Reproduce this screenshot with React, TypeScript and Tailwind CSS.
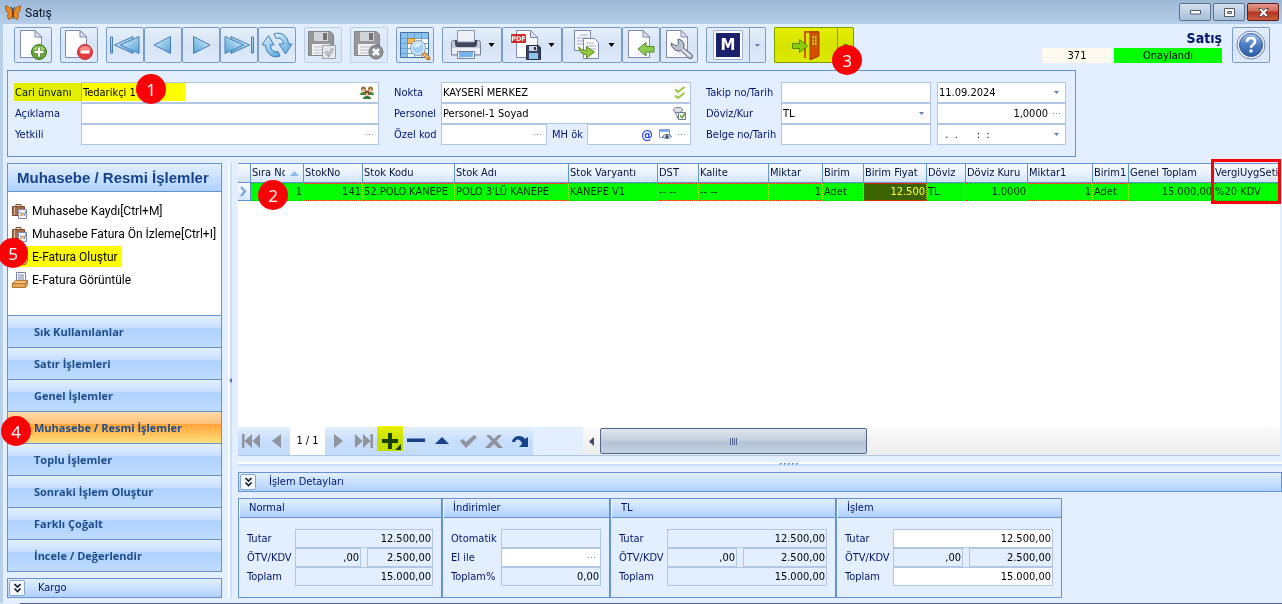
import React, { useId } from "react";
import type { ReactNode } from "react";

const FORM_FONT = "font-['DejaVu_Sans_Condensed','DejaVu_Sans',sans-serif] text-[11px] leading-[14px]";

/* ---------- small glyphs ---------- */

function Caret({ className = "" }: { className?: string }) {
  return (
    <svg width="7" height="4" viewBox="0 0 7 4" className={className} aria-hidden="true">
      <path d="M0.5 0h6L3.5 4z" fill="currentColor" />
    </svg>
  );
}

function Dots() {
  return (
    <svg width="8" height="2" viewBox="0 0 8 2" className="text-[#6f93c4]" aria-hidden="true">
      <path d="M0 0h1v1H0zM3 0h1v1H3zM6 0h1v1H6z" fill="currentColor" />
    </svg>
  );
}

function DoubleChevron() {
  return (
    <svg width="9" height="10" viewBox="0 0 9 10" aria-hidden="true">
      <path d="M1.5 1l3 3 3-3M1.5 5.500l3 3 3-3" fill="none" stroke="#101828" strokeWidth="1.6" />
    </svg>
  );
}

/* ---------- toolbar drawings ---------- */

function Page({ x = 4 }: { x?: number }) {
  return (
    <g transform={`translate(${x} 0)`}>
      <path d="M0.500 1.500H15L21.500 8V28.500H0.500z" fill="#fdfdff" stroke="#8186ad" />
      <path d="M15 1.500V8h6.500z" fill="#e4e6f4" stroke="#8186ad" />
      <path d="M3 26C12 26 17 20 19 11v15z" fill="#e6eaf6" />
    </g>
  );
}

function Drawing({ children }: { children: ReactNode }) {
  return (
    <svg width="32" height="32" viewBox="0 0 32 32" aria-hidden="true">
      {children}
    </svg>
  );
}

function NewIcon() {
  return (
    <Drawing>
      <Page x={3} />
      <circle cx="22" cy="23" r="7.500" fill="#69a838" stroke="#3f7422" />
      <path d="M16 21a6.500 6.500 0 0 1 12 0q-6 3-12 0z" fill="#a6d47a" />
      <path d="M20.500 18h3v3.500H27v3h-3.500V28h-3v-3.500H17v-3h3.500z" fill="#fff" stroke="#4a7d2a" strokeWidth="0.700" />
    </Drawing>
  );
}

function DeleteIcon() {
  return (
    <Drawing>
      <Page x={2} />
      <circle cx="22" cy="23" r="7.500" fill="#e23c3c" stroke="#c93232" />
      <path d="M16 21a6.500 6.500 0 0 1 12 0q-6 2-12 0z" fill="#f58c8c" />
      <path d="M17.500 21.500h9v3h-9z" fill="#fff" />
    </Drawing>
  );
}

function BlueGradient({ id }: { id: string }) {
  return (
    <defs>
      <linearGradient id={id} x1="0" y1="0" x2="1" y2="1">
        <stop offset="0" stopColor="#e4f5fd" />
        <stop offset="1" stopColor="#4fa0d8" />
      </linearGradient>
    </defs>
  );
}

function ArrowIcon({ kind }: { kind: "first" | "prev" | "next" | "last" }) {
  const id = useId();
  const double = kind === "first" || kind === "last";
  const flip = kind === "next" || kind === "last";
  return (
    <Drawing>
      <BlueGradient id={id} />
      <g transform={flip ? "translate(32 0) scale(-1 1)" : undefined} fill={`url(#${id})`} stroke="#4a7fb5">
        {double ? (
          <>
            <path d="M1.500 8h2v16h-2z" />
            <path d="M24 7.500v17L5.500 16z" />
            <path d="M30 7.500v17L11.500 16z" />
          </>
        ) : (
          <path d="M23.500 7.500v17L7 16z" />
        )}
      </g>
    </Drawing>
  );
}

function RefreshIcon() {
  const id = useId();
  return (
    <Drawing>
      <BlueGradient id={id} />
      <g fill={`url(#${id})`} stroke="#3f7fb8" strokeLinejoin="round">
        <path d="M13 5C20 2 27 7 27.500 15H31l-6.500 10L18 15h4.500C22 11 19 8 15 9.500z" />
        <path d="M19 27C12 30 5 25 4.500 16H1L7.500 6.500 13 16H9.500C10 21 13 24 17 22.500z" />
      </g>
    </Drawing>
  );
}

function Floppy({ dark = "#828282" }: { dark?: string }) {
  return (
    <g>
      <path d="M1.500 2.500h22l3 3v21h-25z" fill={dark} stroke="#6e6e6e" />
      <path d="M7 3h14v9H7z" fill="#cfcfcf" />
      <path d="M16 4h4v7h-4z" fill="#555" />
      <path d="M5 15h18v11H5z" fill="#f2f2f2" />
      <path d="M7 18h14M7 21h14M7 24h14" stroke="#b5b5b5" />
    </g>
  );
}

function SaveCheckIcon() {
  return (
    <Drawing>
      <Floppy />
      <path d="M15.500 16.500h13v13h-13z" fill="#e5e5e5" stroke="#8d8d8d" />
      <path d="M18.500 22.500l3 3.500 4.500-6.500" fill="none" stroke="#777" strokeWidth="2.600" />
      <path d="M18.500 22.500l3 3.500 4.500-6.500" fill="none" stroke="#fff" strokeWidth="1" />
    </Drawing>
  );
}

function SaveCancelIcon() {
  return (
    <Drawing>
      <Floppy />
      <circle cx="23" cy="23" r="7" fill="#777" stroke="#5d5d5d" />
      <path d="M20 20l6 6M26 20l-6 6" stroke="#fff" strokeWidth="2.800" />
    </Drawing>
  );
}

function GridSearchIcon() {
  return (
    <Drawing>
      <path d="M1.500 3.500h28v25h-28z" fill="#fff" stroke="#3f70a8" />
      <path d="M2 4h27v5H2zM2 9h6v19H2z" fill="#8cc3ee" />
      <path d="M2 9.500h27M2 14.500h27M2 19.500h27M2 24.500h27M8.500 4v24M15.500 4v24M22.500 4v24" stroke="#6ba1d3" />
      <path d="M8.500 9.500h7v5h-7z" fill="#f7bd58" stroke="#c27f1f" />
      <path d="M24 24l5.500 5.500" stroke="#c87f2c" strokeWidth="4" strokeLinecap="round" />
      <path d="M24.500 24.500l4.500 4.500" stroke="#f5c98b" strokeWidth="1.500" />
      <circle cx="19" cy="19" r="6.500" fill="#9fd0f6" stroke="#e3ebf5" strokeWidth="2" />
      <circle cx="19" cy="19" r="7.500" fill="none" stroke="#5b7fae" strokeWidth="0.800" />
      <path d="M15 18a4.500 4.500 0 0 1 7-3q-2 4-7 3z" fill="#e6f5ff" />
    </Drawing>
  );
}

function PrinterIcon() {
  return (
    <Drawing>
      <path d="M1.500 13.500q0-2 2-2h25q2 0 2 2V26h-29z" fill="#c3c9d8" stroke="#7a829b" />
      <path d="M5 11h22v3.500q0 3.500-3 3.500H8q-3 0-3-3.500z" fill="#3f475c" />
      <path d="M7.500 1.500h17V13h-17z" fill="#eff1f9" stroke="#8c93ad" />
      <path d="M2 19h28v6H2z" fill="#eceff6" />
      <path d="M7.500 22.500h17v7h-17z" fill="#fff" stroke="#7a829b" />
      <path d="M9 23h14v5L9 28.500z" fill="#73b5ea" />
    </Drawing>
  );
}

function PdfIcon() {
  return (
    <Drawing>
      <path d="M6.500 1.500h14l7 7v20h-21z" fill="#fdfdff" stroke="#8186ad" />
      <path d="M20.500 1.500v7h7z" fill="#e4e6f4" stroke="#8186ad" />
      <rect x="1" y="5" width="15" height="9" rx="1" fill="#d02a2a" />
      <text x="8.500" y="12" textAnchor="middle" fontSize="6.500" fontWeight="700" fill="#fff" fontFamily="DejaVu Sans, sans-serif">PDF</text>
      <path d="M16.500 16.500h12l2 2v12h-14z" fill="#3c4660" stroke="#262e44" />
      <path d="M19 17h8v5h-8z" fill="#ccd5e6" />
      <path d="M24 18h2v3h-2z" fill="#333" />
      <path d="M19 24h9v6h-9z" fill="#8fc4ee" />
    </Drawing>
  );
}

function CopyIcon() {
  return (
    <Drawing>
      <path d="M4.500 1.500h16v20h-16z" fill="#f6f7fd" stroke="#7c86ae" />
      <path d="M10 6h8M7 9h11M7 12h6M7 15h6" stroke="#a5abc9" />
      <path d="M13.500 9.500h11l4 4v16h-15z" fill="#fff" stroke="#7c86ae" />
      <path d="M16 14h8M16 17h10M16 20h10" stroke="#a5abc9" />
      <path d="M8.500 18q3 4 8 3.500v-4l8 5.500-8 6v-3.500q-6.500 0-8-7.500z" fill="#94c83d" stroke="#5b8a24" />
    </Drawing>
  );
}

function BackIcon() {
  return (
    <Drawing>
      <Page x={3} />
      <path d="M13 20l8-6.500v4h8v5.500h-8v4z" fill="#8ecb52" stroke="#4d8a26" />
    </Drawing>
  );
}

function WrenchIcon() {
  return (
    <Drawing>
      <Page x={3} />
      <path d="M8 14l5 3 2.500-2-.500-5q5 .5 6 5 .5 2.500-.5 4l8 6q2 2 .5 4-2 1.500-4-.5l-7-7q-3 1.500-6-.5-4-3-4-7z" fill="#bcc3d0" stroke="#5a6277" />
      <path d="M20 21l7 6" stroke="#edf0f6" strokeWidth="1.500" />
    </Drawing>
  );
}

function MIcon() {
  return (
    <Drawing>
      <path d="M1.500 1.500h29v29h-29z" fill="#fdfdff" stroke="#a5b2ca" />
      <path d="M4 4h24v24H4z" fill="#1a2069" />
      <text x="16" y="21" textAnchor="middle" fontSize="15" fontWeight="700" fill="#fff" fontFamily="DejaVu Sans, sans-serif">M</text>
    </Drawing>
  );
}

function DoorIcon() {
  return (
    <Drawing>
      <path d="M14 2h15v2H16v25h-2z" fill="#c65a1c" />
      <path d="M20 3l9 0v24l-9 4z" fill="#d4501f" stroke="#a33c12" />
      <path d="M22 6.500h5v10h-5z" fill="#f4d06a" stroke="#a33c12" strokeWidth="0.600" />
      <path d="M24.500 6.500v10M22 10h5M22 13h5" stroke="#a33c12" strokeWidth="0.800" />
      <path d="M2.500 14.500h7v-4l8 6.500-8 6.500v-4h-7z" fill="#8ecb52" stroke="#4d8a26" />
    </Drawing>
  );
}

function HelpIcon() {
  const id = useId();
  return (
    <Drawing>
      <defs>
        <linearGradient id={id} x1="0" y1="0" x2="0" y2="1">
          <stop offset="0" stopColor="#a8c5ec" />
          <stop offset="0.500" stopColor="#4b7cc4" />
          <stop offset="1" stopColor="#2c5ca8" />
        </linearGradient>
      </defs>
      <circle cx="16" cy="16" r="14" fill="#eef3fb" stroke="#6f86ab" />
      <circle cx="16" cy="16" r="11.500" fill={`url(#${id})`} stroke="#3c5f9b" />
      <path d="M12 13q0-4 4-4t4 3.500q0 2-2.200 3.300-1.800 1-1.800 3" fill="none" stroke="#fff" strokeWidth="2.600" />
      <circle cx="16" cy="22" r="1.700" fill="#fff" />
    </Drawing>
  );
}

function Butterfly() {
  return (
    <svg width="16" height="16" viewBox="0 0 16 16" aria-hidden="true">
      <path d="M7.500 8C6 3 3 .8.500 1c0 4 1 6 3 7-1.500 2-1 5 .5 6.500 2-.5 3.500-3 4-6.500zM8.500 8C10 3 13 .8 15.500 1c0 4-1 6-3 7 1.500 2 1 5-.5 6.500-2-.5-3.500-3-4-6.500z" fill="#f08c1d" stroke="#8f4a0b" strokeWidth="0.800" />
      <path d="M8 5v9M6 2l2 3 2-3" fill="none" stroke="#3c2208" />
    </svg>
  );
}

/* ---------- side bar drawings ---------- */

function BriefcaseIcon() {
  return (
    <svg width="16" height="16" viewBox="0 0 16 16" aria-hidden="true">
      <path d="M4 3V1.500h5V3" fill="none" stroke="#7d4a2a" />
      <path d="M.500 3.500h12v9H.500z" fill="#a8694a" stroke="#7d4a2a" />
      <path d="M2.500 4v8" stroke="#e0b89a" />
      <path d="M6.500 6.500h8v9h-8z" fill="#f3f6fd" stroke="#7c8db5" />
      <path d="M8 9l2 2M12 13l2.500-6" stroke="#5f79b5" />
      <path d="M8 13l4-3" stroke="#dd9338" strokeWidth="1.500" />
    </svg>
  );
}

function TrayIcon() {
  return (
    <svg width="16" height="16" viewBox="0 0 16 16" aria-hidden="true">
      <path d="M4.500.500h9v9h-9z" fill="#fff" stroke="#7180b3" />
      <path d="M6 3h6M6 5h6M6 7h6" stroke="#7180b3" />
      <path d="M.500 11.500l3-3h12l-2 3z" fill="#f4c17d" stroke="#b8772f" />
      <path d="M.500 11.500h13v4H.500zM13.500 11.500l2-3v4l-2 3z" fill="#e9a65a" stroke="#b8772f" />
    </svg>
  );
}

/* ---------- toolbar ---------- */

const buttonFace =
  "border border-[#7c9cc8] rounded-[2px] bg-linear-to-b from-[#e6effb] via-[#d6e4f6] to-[#dceafb] flex items-center justify-center h-9";

function ToolButton({ label, disabled, arrow, children }: { label: string; disabled?: boolean; arrow?: boolean; children: ReactNode }) {
  return (
    <button
      type="button"
      aria-label={label}
      disabled={disabled}
      className={`${buttonFace} ${arrow ? "w-15 gap-[6px]" : "w-[38px]"} disabled:border-[#b3c6de] disabled:opacity-80`}
    >
      {children}
      {arrow && <Caret className="text-black" />}
    </button>
  );
}

function SplitButton({ label, width, highlight, children }: { label: string; width: string; highlight?: boolean; children: ReactNode }) {
  return (
    <div className={`relative flex ${width}`}>
      <button type="button" aria-label={label} className={`${buttonFace} flex-1 rounded-r-none`}>
        {children}
      </button>
      <button type="button" aria-label={`${label} seçenekleri`} className={`${buttonFace} w-[17px] -ml-px rounded-l-none text-[#5f80b0]`}>
        <svg width="5" height="3" viewBox="0 0 5 3" aria-hidden="true"><path d="M0 0h5L2.500 3z" fill="currentColor" /></svg>
      </button>
      {highlight && <span className="absolute inset-0 bg-[#ffff00] mix-blend-multiply pointer-events-none" />}
    </div>
  );
}

function Toolbar() {
  return (
    <div className="flex items-start pl-[11px] pr-3 pt-[3px] pb-[7px]">
      <div className="flex gap-2">
        <ToolButton label="Yeni"><NewIcon /></ToolButton>
        <ToolButton label="Sil"><DeleteIcon /></ToolButton>
        <div className="flex">
          <ToolButton label="İlk"><ArrowIcon kind="first" /></ToolButton>
          <ToolButton label="Önceki"><ArrowIcon kind="prev" /></ToolButton>
          <ToolButton label="Sonraki"><ArrowIcon kind="next" /></ToolButton>
          <ToolButton label="Son"><ArrowIcon kind="last" /></ToolButton>
          <ToolButton label="Yenile"><RefreshIcon /></ToolButton>
        </div>
        <ToolButton label="Kaydet" disabled><SaveCheckIcon /></ToolButton>
        <ToolButton label="Vazgeç" disabled><SaveCancelIcon /></ToolButton>
        <ToolButton label="Listele"><GridSearchIcon /></ToolButton>
        <div className="flex">
          <ToolButton label="Yazdır" arrow><PrinterIcon /></ToolButton>
          <ToolButton label="PDF kaydet" arrow><PdfIcon /></ToolButton>
          <ToolButton label="Kopyala" arrow><CopyIcon /></ToolButton>
          <ToolButton label="Geri al"><BackIcon /></ToolButton>
          <ToolButton label="Ayarlar"><WrenchIcon /></ToolButton>
        </div>
        <SplitButton label="M" width="w-15"><MIcon /></SplitButton>
        <div className="relative">
          <SplitButton label="Çıkış" width="w-20" highlight><DoorIcon /></SplitButton>
          <Badge n={3} place="left-[58px] top-[18px]" />
        </div>
      </div>
      <div className="ml-auto flex gap-[10px]">
        <div className="flex flex-col items-end pt-px">
          <div className="font-['DejaVu_Sans_Condensed','DejaVu_Sans',sans-serif] text-sm leading-5 font-bold text-[#00156e]">Satış</div>
          <div className="flex gap-[2px] text-black font-['DejaVu_Sans_Condensed','DejaVu_Sans',sans-serif] text-[11px] leading-4">
            <span className="w-[70px] h-[15px] bg-[#fffaf0] text-center">371</span>
            <span className="w-[108px] h-[15px] bg-[#00ff00] text-center">Onaylandı</span>
          </div>
        </div>
        <ToolButton label="Yardım"><HelpIcon /></ToolButton>
      </div>
    </div>
  );
}

function Badge({ n, place }: { n: number; place: string }) {
  return (
    <span
      className={`absolute z-10 size-[30px] rounded-full bg-[#fb0007] text-white flex items-center justify-center font-['Noto_Sans',sans-serif] text-[17px] font-normal leading-none pointer-events-none ${place}`}
    >
      {n}
    </span>
  );
}

/* ---------- form ---------- */

const box = "flex items-center border border-[#b0c6e2] min-w-0";

type FieldProps = {
  id: string;
  name?: string;
  value?: string;
  right?: boolean;
  className?: string;
  tone?: string;
  height?: string;
  tail?: ReactNode;
};

function Field({ id, name, value = "", right, className = "", tone = "bg-white", height = "h-[21px]", tail }: FieldProps) {
  return (
    <div className={`${box} ${height} ${tone} ${className}`}>
      <input
        id={id}
        aria-label={name}
        defaultValue={value}
        className={`w-full min-w-0 bg-transparent outline-none text-black px-px ${right ? "text-right" : ""}`}
      />
      {tail && <span className="flex items-center gap-1 shrink-0 pr-1">{tail}</span>}
    </div>
  );
}

function PeopleGlyph() {
  return (
    <svg width="14" height="13" viewBox="0 0 14 13" aria-hidden="true">
      <circle cx="3.500" cy="3" r="2.500" fill="#9b6a35" /><circle cx="10.500" cy="3" r="2.500" fill="#9b6a35" />
      <circle cx="3.500" cy="4" r="1.300" fill="#f1c592" /><circle cx="10.500" cy="4" r="1.300" fill="#f1c592" />
      <path d="M0 9q0-3 3.500-3T7 9q0-3 3.500-3T14 9z" fill="#3f8f37" />
      <circle cx="7" cy="7" r="2.500" fill="#8a3f1f" /><circle cx="7" cy="8" r="1.300" fill="#f1c592" />
      <path d="M3 13q0-3 4-3t4 3z" fill="#2f7d2b" />
    </svg>
  );
}

function DoubleCheckGlyph() {
  return (
    <svg width="12" height="13" viewBox="0 0 12 13" aria-hidden="true">
      <path d="M1 3.500l3 2.500 6.500-5M1 9.500l3 2.500 6.500-5" fill="none" stroke="#96c93d" strokeWidth="1.900" />
    </svg>
  );
}

function PersonCheckGlyph() {
  return (
    <svg width="13" height="13" viewBox="0 0 13 13" aria-hidden="true">
      <path d="M.5 3q0-2.500 4.500-2.500T9.500 3 5 5.500.5 3zM2.500 5q-1 2 1 2.500l1 4 3-1" fill="#dfe4ec" stroke="#6f7a8c" />
      <path d="M5.500 5.500h7v7h-7z" fill="#fff" stroke="#6f7a8c" />
      <path d="M7 8.500l2 2 3-4" fill="none" stroke="#5aa02c" strokeWidth="1.500" />
    </svg>
  );
}

function ViewGlyph() {
  return (
    <svg width="13" height="11" viewBox="0 0 13 11" aria-hidden="true">
      <path d="M.500.500h10v8H.500z" fill="#fff" stroke="#7f9cc6" />
      <path d="M1 1h9v2H1z" fill="#7fb0e3" />
      <path d="M3.500 7.500q4.500-4.500 9 0-4.500 4-9 0z" fill="#e7eef7" stroke="#566b8b" />
      <circle cx="8" cy="7.500" r="1.500" fill="#33445f" />
    </svg>
  );
}

const blueCaret = (
  <svg width="5" height="3" viewBox="0 0 5 3" className="text-[#5f80b0] mr-[2px]" aria-hidden="true">
    <path d="M0 0h5L2.500 3z" fill="currentColor" />
  </svg>
);

function LabeledRow({ id, label, width, children }: { id: string; label: string; width: string; children: ReactNode }) {
  return (
    <div className="flex items-center">
      <label htmlFor={id} className={`${width} shrink-0 pl-px whitespace-nowrap text-[#00156e]`}>{label}</label>
      {children}
    </div>
  );
}

function HeaderForm() {
  return (
    <section className={`ml-1 mr-[206px] border border-[#6593cf] px-[6px] pt-[11px] pb-[11px] flex gap-[14px] ${FORM_FONT}`}>
      <div className="relative w-[365px]">
        <LabeledRow id="cari" label="Cari ünvanı" width="w-[67px]">
          <Field id="cari" value="Tedarikçi 1" className="flex-1" tail={<PeopleGlyph />} />
        </LabeledRow>
        <span className="absolute left-0 top-px w-[171px] h-[18px] bg-[#ffff00] mix-blend-multiply pointer-events-none" />
        <Badge n={1} place="left-[122px] -top-[8px]" />
        <LabeledRow id="aciklama" label="Açıklama" width="w-[67px]">
          <Field id="aciklama" className="flex-1" />
        </LabeledRow>
        <LabeledRow id="yetkili" label="Yetkili" width="w-[67px]">
          <Field id="yetkili" className="flex-1" tail={<Dots />} />
        </LabeledRow>
      </div>
      <div className="w-[298px]">
        <LabeledRow id="nokta" label="Nokta" width="w-[48px]">
          <Field id="nokta" value="KAYSERİ MERKEZ" className="flex-1" tail={<DoubleCheckGlyph />} />
        </LabeledRow>
        <LabeledRow id="personel" label="Personel" width="w-[48px]">
          <Field id="personel" value="Personel-1 Soyad" className="flex-1" tail={<PersonCheckGlyph />} />
        </LabeledRow>
        <LabeledRow id="ozel" label="Özel kod" width="w-[48px]">
          <Field id="ozel" className="w-[106px]" tail={<Dots />} />
          <label htmlFor="mh" className="w-10 pl-[5px] whitespace-nowrap text-[#00156e]">MH ök</label>
          <Field
            id="mh"
            className="flex-1"
            tail={
              <span className="flex items-center gap-[6px]">
                <span className="text-[#2346e6] font-bold text-[13px]">@</span>
                <ViewGlyph />
                <Dots />
              </span>
            }
          />
        </LabeledRow>
      </div>
      <div className="w-[361px]">
        <LabeledRow id="takip" label="Takip no/Tarih" width="w-[76px]">
          <Field id="takip" className="w-[150px]" />
          <Field id="tarih" name="Tarih" value="11.09.2024" className="flex-1 ml-[6px]" tail={blueCaret} />
        </LabeledRow>
        <LabeledRow id="doviz" label="Döviz/Kur" width="w-[76px]">
          <div className={`${box} relative bg-white h-[21px] w-[150px]`}>
            <select id="doviz" className="w-full appearance-none bg-transparent outline-none px-px text-black">
              <option>TL</option>
            </select>
            <span className="absolute right-1 pointer-events-none">{blueCaret}</span>
          </div>
          <Field id="kur" name="Kur" value="1,0000" right className="flex-1 ml-[6px]" tail={<span className="pl-1"><Dots /></span>} />
        </LabeledRow>
        <LabeledRow id="belge" label="Belge no/Tarih" width="w-[76px]">
          <Field id="belge" className="w-[150px]" />
          <Field id="belgetarih" name="Belge tarihi" value="  .  .      :  :" className="flex-1 ml-[6px] whitespace-pre" tail={blueCaret} />
        </LabeledRow>
      </div>
    </section>
  );
}

/* ---------- side bar ---------- */

const groupNames = [
  "Sık Kullanılanlar",
  "Satır İşlemleri",
  "Genel İşlemler",
  "Muhasebe / Resmi İşlemler",
  "Toplu İşlemler",
  "Sonraki İşlem Oluştur",
  "Farklı Çoğalt",
  "İncele / Değerlendir",
];

const actions = [
  { text: "Muhasebe Kaydı[Ctrl+M]", icon: <BriefcaseIcon /> },
  { text: "Muhasebe Fatura Ön İzleme[Ctrl+I]", icon: <BriefcaseIcon /> },
  { text: "E-Fatura Oluştur", icon: <TrayIcon />, marked: true },
  { text: "E-Fatura Görüntüle", icon: <TrayIcon /> },
];

function CollapseBar({ title }: { title: string }) {
  return (
    <div className={`flex items-center h-5 border border-[#6593cf] bg-linear-to-b from-[#e3efff] to-[#afd2ff] ${FORM_FONT}`}>
      <button type="button" aria-label={`${title} aç`} className="ml-px size-4 rounded-[2px] border border-[#8aa5cc] bg-[#f3f8ff] flex items-center justify-center">
        <DoubleChevron />
      </button>
      <span className="pl-[13px] text-[#00156e]">{title}</span>
    </div>
  );
}

function SideBar() {
  return (
    <aside className="w-[215px] shrink-0 flex flex-col gap-[6px]">
      <div className="flex-1 flex flex-col border border-[#6593cf] bg-white">
        <h2 className="h-7 flex items-center pl-[9px] border-b border-[#6593cf] bg-linear-to-b from-[#e3efff] to-[#afd2ff] font-['Liberation_Sans',Arial,sans-serif] text-[15px] leading-5 font-bold text-[#15428b] whitespace-nowrap">
          Muhasebe / Resmi İşlemler
        </h2>
        <div className="flex-1 flex flex-col items-start pt-[7px]">
          {actions.map((a) => (
            <button
              key={a.text}
              type="button"
              className={`relative flex items-center h-[21px] my-px pl-[3px] pr-1 gap-[3px] font-['Roboto','Noto_Sans',sans-serif] text-xs leading-4 text-black whitespace-nowrap ${
                a.marked ? "bg-[#ffff00]" : ""
              }`}
            >
              <span className="w-[18px] flex justify-center">{a.icon}</span>
              <span>{a.text}</span>
              {a.marked && <Badge n={5} place="-left-[10px] -top-[8px]" />}
            </button>
          ))}
        </div>
        {groupNames.map((g, i) => (
          <button
            key={g}
            type="button"
            className={`relative h-8 border-t border-[#6593cf] flex items-center pl-[26px] font-['Open_Sans','Noto_Sans',sans-serif] text-[11px] leading-4 font-bold text-[#204d89] ${
              i === 3
                ? "bg-[linear-gradient(to_bottom,#ffdaa9_0%,#ffc27a_38%,#ffa53a_40%,#ffe07f_100%)]"
                : "bg-[linear-gradient(to_bottom,#e3efff_0%,#c8dfff_38%,#afd2ff_40%,#c0dbff_100%)]"
            }`}
          >
            {g}
            {i === 3 && <Badge n={4} place="-left-[7px] top-1" />}
          </button>
        ))}
      </div>
      <CollapseBar title="Kargo" />
    </aside>
  );
}

/* ---------- stock table ---------- */

const columns = [
  { head: "Sıra No", cell: "1", width: "w-[53px]", right: true, sorted: true },
  { head: "StokNo", cell: "141", width: "w-[59px]", right: true },
  { head: "Stok Kodu", cell: "52.POLO.KANEPE", width: "w-[92px]" },
  { head: "Stok Adı", cell: "POLO 3'LÜ KANEPE", width: "w-[114px]" },
  { head: "Stok Varyantı", cell: "KANEPE V1", width: "w-[89px]" },
  { head: "DST", cell: "-- --", width: "w-[41px]" },
  { head: "Kalite", cell: "-- --", width: "w-[70px]" },
  { head: "Miktar", cell: "1", width: "w-[54px]", right: true },
  { head: "Birim", cell: "Adet", width: "w-[41px]" },
  { head: "Birim Fiyat", cell: "12.500", width: "w-[63px]", right: true, focused: true },
  { head: "Döviz", cell: "TL", width: "w-[39px]" },
  { head: "Döviz Kuru", cell: "1,0000", width: "w-[62px]", right: true },
  { head: "Miktar1", cell: "1", width: "w-[65px]", right: true },
  { head: "Birim1", cell: "Adet", width: "w-[36px]" },
  { head: "Genel Toplam", cell: "15.000,00", width: "w-[85px]", right: true },
  { head: "VergiUygSeti", cell: "%20 KDV", width: "w-[66px]" },
];

const headFace = "bg-linear-to-b from-[#f8fbff] via-[#e9f2fe] to-[#d3e4fa] border-[#6593cf] border-b border-r";

function StockTable() {
  return (
    <div className="relative">
      <table className={`w-full table-fixed border-separate border-spacing-0 ${FORM_FONT}`}>
        <thead>
          <tr>
            <th className={`w-[13px] h-5 p-0 border-t ${headFace}`} aria-label="Seçim" />
            {columns.map((c) => (
              <th key={c.head} className={`h-5 p-0 border-t ${headFace} ${c.width} text-left font-normal text-[#00123f]`}>
                <div className="flex items-center">
                  <span className="pl-px overflow-hidden whitespace-nowrap flex-1">{c.head}</span>
                  {c.sorted && (
                    <svg width="18" height="5" viewBox="0 0 18 5" className="shrink-0" aria-hidden="true">
                      <path d="M5 5l4.500-5L14 5z" fill="#8fbaf0" />
                    </svg>
                  )}
                </div>
              </th>
            ))}
          </tr>
        </thead>
        <tbody>
          <tr>
            <td className={`h-[18px] p-0 ${headFace}`}>
              <svg width="11" height="11" viewBox="0 0 11 11" aria-hidden="true">
                <path d="M3 1l4 4.500L3 10" fill="none" stroke="#6fa2e0" strokeWidth="2" />
              </svg>
            </td>
            {columns.map((c) => (
              <td
                key={c.head}
                className={`h-[18px] py-0 px-px overflow-hidden whitespace-nowrap border-y border-dotted border-y-[#e03c00] border-r border-r-[#d9e400] ${
                  c.focused ? "bg-[#3c6400] text-[#ffff3c]" : "bg-[#00ff00] text-[#002b00]"
                } ${c.right ? "text-right" : "text-left"}`}
              >
                {c.cell}
              </td>
            ))}
          </tr>
        </tbody>
      </table>
      <span className="absolute -right-px -top-1 w-[70px] h-[45px] border-3 border-[#fb0007] pointer-events-none" />
      <Badge n={2} place="left-5 top-[17px]" />
    </div>
  );
}

/* ---------- record navigator ---------- */

type NavItem = { name: string; d: string; off?: boolean; plus?: boolean };

const navLeft: NavItem[] = [
  { name: "İlk kayıt", d: "M0 1h2.500v14H0zM10 1v14L2.500 8zM18 1v14L10.500 8z", off: true },
  { name: "Önceki kayıt", d: "M13 1v14L4 8z", off: true },
];

const navRight: NavItem[] = [
  { name: "Sonraki kayıt", d: "M5 1v14l9-7z", off: true },
  { name: "Son kayıt", d: "M0 1v14l7.500-7zM8 1v14l7.500-7zM15.500 1H18v14h-2.500z", off: true },
  { name: "Ekle", d: "M7 0h4v6h6v4h-6v6H7v-6H1V6h6z", plus: true },
  { name: "Çıkar", d: "M0 5.500h18v3.500H0z" },
  { name: "Düzenle", d: "M2 11l7-7 7 7z" },
  { name: "Onayla", d: "M1 8l3-2 3 3 8-7 3 2L7 15z", off: true },
  { name: "İptal", d: "M1 2h4l4 4 4-4h4l-5.500 6L18 15h-5l-4-4-4 4H0l6.500-7z", off: true },
  { name: "Yenile", d: "M1 9C2 2 11 1 14 6l3-2v10H8l3-3C10 6 5 5 4 9z" },
];

function NavButton({ item }: { item: NavItem }) {
  return (
    <button type="button" aria-label={item.name} className="relative w-[26px] h-7 flex items-center justify-center">
      <svg width="18" height="16" viewBox="0 0 18 16" aria-hidden="true">
        <path d={item.d} fill={item.off ? "#8f939b" : "#164287"} />
      </svg>
      {item.plus && (
        <>
          <svg width="6" height="6" viewBox="0 0 6 6" className="absolute right-[2px] bottom-[5px]" aria-hidden="true">
            <path d="M6 0v6H0z" fill="#164287" />
          </svg>
          <span className="absolute inset-x-0 -top-px bottom-1 bg-[#ffff00] mix-blend-multiply" />
        </>
      )}
    </button>
  );
}

function Navigator() {
  return (
    <div className="flex h-[29px] border-b border-[#b0c6e2] bg-[#e3efff]">
      <div className="flex shrink-0 bg-linear-to-b from-[#e3efff] via-[#c6ddfb] to-[#c4dcfb]">
        {navLeft.map((n) => <NavButton key={n.name} item={n} />)}
        <span className={`w-[35px] bg-white flex items-center justify-center text-black ${FORM_FONT}`}>1 / 1</span>
        {navRight.map((n) => <NavButton key={n.name} item={n} />)}
      </div>
      <div className="flex-1 ml-[50px] flex bg-linear-to-b from-[#fafafa] to-[#ececec]">
        <button type="button" aria-label="Sola kaydır" className="w-[17px] flex items-center justify-center">
          <svg width="5" height="9" viewBox="0 0 5 9" aria-hidden="true"><path d="M5 0v9L0 4.500z" fill="#3c4d70" /></svg>
        </button>
        <div className="w-[267px] my-px rounded-[2px] border border-[#53648d] bg-[linear-gradient(to_bottom,#dfe6ee_0%,#c8d3df_40%,#b4c3d5_60%,#c4d2e2_100%)] flex items-center justify-center">
          <svg width="8" height="7" viewBox="0 0 8 7" aria-hidden="true"><path d="M.5 0v7M2.500 0v7M4.500 0v7M6.500 0v7" stroke="#53648d" /></svg>
        </div>
      </div>
    </div>
  );
}

/* ---------- totals ---------- */

function Panel({ title, width, children }: { title: string; width: string; children: ReactNode }) {
  return (
    <fieldset className={`${width} min-w-0 border border-[#6593cf]`}>
      <div className="h-[19px] flex items-center pl-[9px] border-b border-[#6593cf] border-l border-l-white bg-linear-to-b from-[#e3efff] to-[#afd2ff] text-[#00156e]">
        {title}
      </div>
      <div className="px-2 pt-[11px] pb-[11px]">{children}</div>
    </fieldset>
  );
}

const plain = "bg-[#e3efff]";

function Row({ id, label, width, children }: { id: string; label: string; width: string; children: ReactNode }) {
  return (
    <div className="flex h-[19px] items-center">
      <label htmlFor={id} className={`${width} shrink-0 whitespace-nowrap text-[#00156e]`}>{label}</label>
      {children}
    </div>
  );
}

function TotalsPanel({ id, title, width, split, tone = plain }: { id: string; title: string; width: string; split: string; tone?: string }) {
  return (
    <Panel title={title} width={width}>
      <Row id={`${id}-tutar`} label="Tutar" width="w-12">
        <Field id={`${id}-tutar`} value="12.500,00" right tone={tone} height="h-[19px]" className="flex-1" />
      </Row>
      <Row id={`${id}-otv`} label="ÖTV/KDV" width="w-12">
        <Field id={`${id}-otv`} value=",00" right tone={plain} height="h-[19px]" className={split} />
        <Field id={`${id}-kdv`} name="KDV" value="2.500,00" right tone={plain} height="h-[19px]" className="flex-1 ml-[6px]" />
      </Row>
      <Row id={`${id}-toplam`} label="Toplam" width="w-12">
        <Field id={`${id}-toplam`} value="15.000,00" right tone={tone} height="h-[19px]" className="flex-1" />
      </Row>
    </Panel>
  );
}

function Totals() {
  return (
    <div className={`flex ${FORM_FONT}`}>
      <TotalsPanel id="normal" title="Normal" width="w-[204px]" split="w-[66px]" />
      <Panel title="İndirimler" width="w-[168px]">
        <Row id="oto" label="Otomatik" width="w-[50px]">
          <Field id="oto" tone={plain} height="h-[19px]" className="flex-1" />
        </Row>
        <Row id="elile" label="El ile" width="w-[50px]">
          <Field id="elile" height="h-[19px]" className="flex-1" tail={<Dots />} />
        </Row>
        <Row id="yuzde" label="Toplam%" width="w-[50px]">
          <Field id="yuzde" value="0,00" right tone={plain} height="h-[19px]" className="flex-1" />
        </Row>
      </Panel>
      <TotalsPanel id="tl" title="TL" width="w-[226px]" split="w-[70px]" />
      <TotalsPanel id="islem" title="İşlem" width="w-[226px]" split="w-[70px]" tone="bg-white" />
    </div>
  );
}

/* ---------- window ---------- */

function TitleBar() {
  const face = "w-8 h-[18px] rounded-[2px] border flex items-center justify-center";
  return (
    <header className="flex h-6 items-start bg-linear-to-b from-[#9db8d6] to-[#b5cde8] pl-[5px] pr-[3px]">
      <div className="flex items-center gap-1 h-6 pt-px font-['Roboto','Noto_Sans',sans-serif] text-xs text-[#0b1626]">
        <Butterfly />
        <h1>Satış</h1>
      </div>
      <div className="ml-auto flex gap-[2px] pt-[3px]">
        <button type="button" aria-label="Küçült" className={`${face} border-[#5c7390] bg-linear-to-b from-[#d3e0ee] to-[#a7bfda]`}>
          <svg width="11" height="5" viewBox="0 0 11 5" aria-hidden="true"><path d="M.5.500h10v3.500H.500z" fill="#fff" stroke="#535a66" /></svg>
        </button>
        <button type="button" aria-label="Büyüt" className={`${face} border-[#5c7390] bg-linear-to-b from-[#d3e0ee] to-[#a7bfda]`}>
          <svg width="11" height="9" viewBox="0 0 11 9" aria-hidden="true"><path d="M.5.500h10v8H.500zM3.500 3.500v2h4v-2z" fill="#fff" fillRule="evenodd" stroke="#535a66" /></svg>
        </button>
        <button type="button" aria-label="Kapat" className={`${face} border-[#5b1d1a] bg-[linear-gradient(to_bottom,#e2998a_0%,#cf6a58_45%,#b3321d_50%,#cc5a3d_100%)]`}>
          <svg width="11" height="9" viewBox="0 0 11 9" aria-hidden="true">
            <path d="M.5.500h3l2 2 2-2h3l-3 4 3 4h-3l-2-2-2 2h-3l3-4z" fill="#fff" stroke="#50404a" strokeWidth="0.900" />
          </svg>
        </button>
      </div>
    </header>
  );
}

export default function App() {
  return (
    <div className="relative min-h-screen flex flex-col bg-[#e3efff] overflow-hidden">
      <TitleBar />
      <div className="flex-1 flex flex-col border-l-3 border-[#b9d0ea]">
        <Toolbar />
        <HeaderForm />
        <main className="flex-1 flex pl-1 pt-[6px] pb-[5px]">
          <SideBar />
          <div className="w-1 mx-[6px] shrink-0 border-l-2 border-white bg-[#c8defa] flex items-center">
            <svg width="3" height="5" viewBox="0 0 3 5" className="shrink-0 -ml-px" aria-hidden="true"><path d="M3 0v5L0 2.500z" fill="#4479bd" /></svg>
          </div>
          <div className="flex-1 min-w-0 flex flex-col">
            <div className="flex-1 flex flex-col justify-between bg-white mr-[2px]">
              <StockTable />
              <Navigator />
            </div>
            <div className="my-[6px] pl-[58px] h-1 border-t-2 border-white bg-[#c8defa] flex justify-center">
              <svg width="19" height="3" viewBox="0 0 19 3" className="-mt-px" aria-hidden="true">
                <path d="M0 0h2v1H0zM4 0h2v1H4zM8 0h2v1H8zM12 0h2v1h-2zM16 0h2v1h-2zM0 1h1v1H0zM4 1h1v1H4zM8 1h1v1H8zM12 1h1v1h-1zM16 1h1v1h-1z" fill="#6593cf" />
              </svg>
            </div>
            <CollapseBar title="İşlem Detayları" />
            <div className="h-[6px]" />
            <Totals />
          </div>
        </main>
      </div>
      <footer className="h-px ml-5 bg-[#4d5d8c]" />
    </div>
  );
}
